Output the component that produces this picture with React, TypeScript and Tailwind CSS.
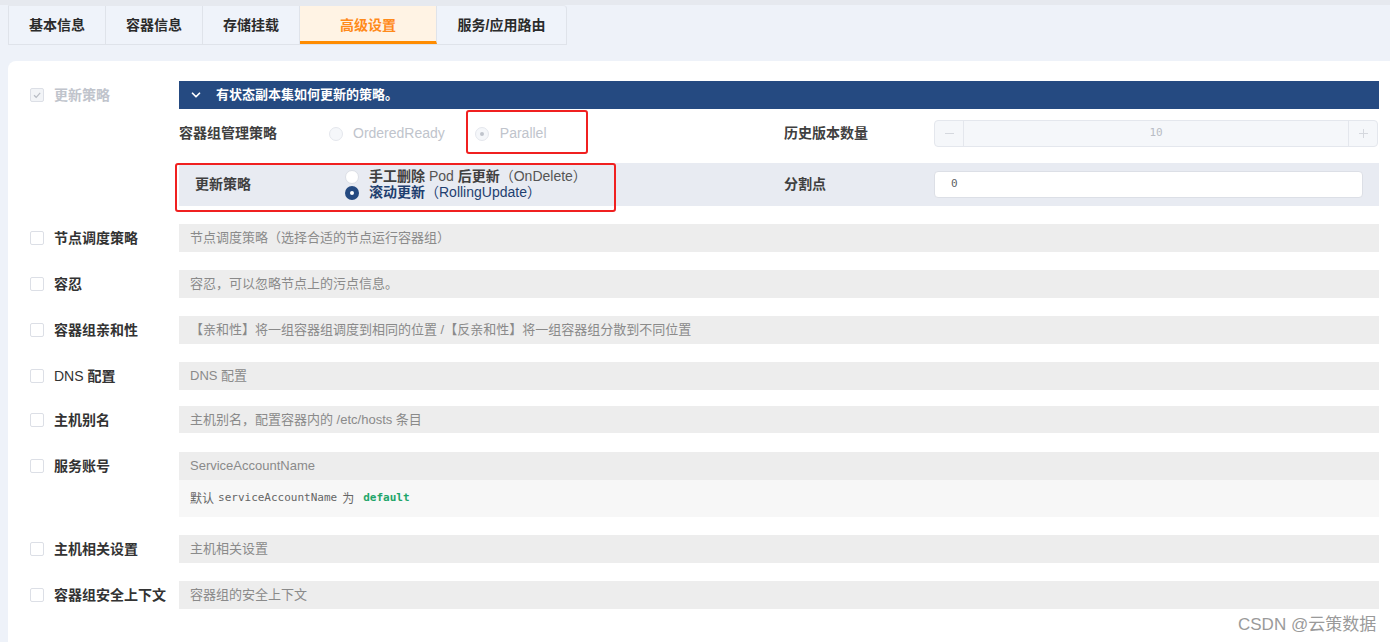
import React from "react";

const CJK = "font-['Liberation_Sans','Noto_Sans_CJK_SC',sans-serif]";

function Checkbox({ checked = false }: { checked?: boolean }) {
  if (checked) {
    return (
      <span className="flex h-[14px] w-[14px] shrink-0 items-center justify-center rounded-[2px] border border-[#dcdfe6] bg-[#f2f4f7]">
        <svg width="10" height="10" viewBox="0 0 10 10">
          <path d="M2 5.2 L4.2 7.3 L8.2 2.8" fill="none" stroke="#b8bcc4" strokeWidth="1.2" />
        </svg>
      </span>
    );
  }
  return <span className="h-[14px] w-[14px] shrink-0 rounded-[2px] border border-[#dcdfe6] bg-white" />;
}

function Radio({ kind }: { kind: "off" | "disabledOff" | "disabledOn" | "on" }) {
  if (kind === "on") {
    return (
      <span className="flex h-[14px] w-[14px] shrink-0 items-center justify-center rounded-full bg-[#254a81]">
        <span className="h-[4px] w-[4px] rounded-full bg-white" />
      </span>
    );
  }
  if (kind === "disabledOn") {
    return (
      <span className="flex h-[14px] w-[14px] shrink-0 items-center justify-center rounded-full border border-[#e4e7ed] bg-[#f5f7fa]">
        <span className="h-[4px] w-[4px] rounded-full bg-[#c0c4cc]" />
      </span>
    );
  }
  if (kind === "disabledOff") {
    return <span className="h-[14px] w-[14px] shrink-0 rounded-full border border-[#e4e7ed] bg-[#f5f7fa]" />;
  }
  return <span className="h-[14px] w-[14px] shrink-0 rounded-full border border-[#dcdfe6] bg-white" />;
}

function Row({
  label,
  children,
  mt = "mt-[18px]",
}: {
  label: React.ReactNode;
  children: React.ReactNode;
  mt?: string;
}) {
  return (
    <div className={`flex items-start ${mt}`}>
      <div className="flex h-[28px] w-[171px] shrink-0 items-center gap-[10px] pl-[22px]">
        <Checkbox />
        <span className="text-[14px] font-bold text-[#333]">{label}</span>
      </div>
      <div className="w-[1200px]">{children}</div>
    </div>
  );
}

function Bar({ text, h = "h-[28px]" }: { text: React.ReactNode; h?: string }) {
  return (
    <div className={`flex ${h} items-center bg-[#ededed] pl-[11px] text-[13px] text-[#8a8a8a]`}>{text}</div>
  );
}

export default function App() {
  const tabs = ["基本信息", "容器信息", "存储挂载", "高级设置", "服务/应用路由"];
  const widths = ["w-[97px]", "w-[97px]", "w-[97px]", "w-[137px]", "w-[129px]"];
  return (
    <div className={`relative h-[642px] w-[1390px] overflow-hidden bg-[#eef2f9] ${CJK}`}>
      <div className="h-[5px] bg-[#e6e9ef]" />
      {/* tabs */}
      <div className="ml-[8px] flex h-[40px] w-fit rounded-tr-[4px] border border-b-[#dfe3ea] border-l-[#dfe3ea] border-r-[#dfe3ea] border-t-[#e6e9ef] bg-[#eff3fa]">
        {tabs.map((t, i) => {
          const active = i === 3;
          return (
            <div
              key={t}
              className={`flex ${widths[i]} items-center justify-center text-[14px] font-bold ${
                i < 4 ? "border-r border-[#dfe3ea]" : ""
              } ${active ? "border-b-[3px] border-b-[#ff8c00] bg-[#fff3e4] pt-[3px] text-[#ff8a1a]" : "text-[#2b2b2b]"}`}
            >
              {t}
            </div>
          );
        })}
      </div>
      {/* card */}
      <div className="ml-[8px] mt-[16px] h-[600px] rounded-tl-[8px] bg-white pt-[20px]">
        {/* update strategy row */}
        <div className="flex items-start">
          <div className="flex h-[28px] w-[171px] shrink-0 items-center gap-[10px] pl-[22px]">
            <Checkbox checked />
            <span className="text-[14px] font-bold text-[#c0c4cc]">更新策略</span>
          </div>
          <div className="w-[1200px]">
            <div className="flex h-[28px] items-center bg-[#254a81] pl-[10px] text-white">
              <svg width="14" height="14" viewBox="0 0 24 24" fill="none" stroke="white" strokeWidth="3" strokeLinecap="round" strokeLinejoin="round">
                <path d="M6 9l6 6 6-6" />
              </svg>
              <span className="ml-[13px] text-[13px] font-bold">有状态副本集如何更新的策略。</span>
            </div>
            <div className="mt-[11px] flex h-[27px] items-center">
              <div className="flex w-[605px] items-center">
                <span className="w-[150px] text-[14px] font-bold text-[#404040]">容器组管理策略</span>
                <div className="flex items-center gap-[10px]">
                  <Radio kind="disabledOff" />
                  <span className="text-[14px] text-[#c0c4cc]">OrderedReady</span>
                </div>
                <div className="ml-[30px] flex items-center gap-[11px]">
                  <Radio kind="disabledOn" />
                  <span className="text-[14px] text-[#c0c4cc]">Parallel</span>
                </div>
              </div>
              <div className="flex w-[595px] items-center">
                <span className="w-[150px] text-[14px] font-bold text-[#404040]">历史版本数量</span>
                <div className="flex h-[27px] w-[444px] items-stretch rounded-[4px] border border-[#e4e7ed] bg-[#f5f7fa]">
                  <div className="flex w-[29px] items-center justify-center border-r border-[#e4e7ed]">
                    <span className="h-px w-[9px] bg-[#d5d8de]" />
                  </div>
                  <div className="flex flex-1 items-center justify-center font-['DejaVu_Sans_Mono',monospace] text-[11px] text-[#b8bcc4]">
                    10
                  </div>
                  <div className="relative flex w-[29px] items-center justify-center border-l border-[#e4e7ed]">
                    <span className="absolute h-px w-[9px] bg-[#d5d8de]" />
                    <span className="absolute h-[9px] w-px bg-[#d5d8de]" />
                  </div>
                </div>
              </div>
            </div>
            <div className="mt-[16px] flex h-[43px] items-center bg-[#e8ebf2]">
              <div className="flex w-[605px] items-center pl-[16px]">
                <span className="w-[150px] text-[14px] font-bold text-[#404040]">更新策略</span>
                <div className="flex flex-col">
                  <div className="flex h-[16px] items-center gap-[10px]">
                    <Radio kind="off" />
                    <span className="text-[14px] text-[#555]">
                      <b className="text-[#404040]">手工删除</b> Pod <b className="text-[#404040]">后更新</b>（OnDelete）
                    </span>
                  </div>
                  <div className="flex h-[16px] items-center gap-[10px]">
                    <Radio kind="on" />
                    <span className="text-[14px] text-[#1f3f70]">
                      <b>滚动更新</b>（RollingUpdate）
                    </span>
                  </div>
                </div>
              </div>
              <div className="flex w-[595px] items-center">
                <span className="w-[150px] text-[14px] font-bold text-[#404040]">分割点</span>
                <div className="flex h-[27px] w-[429px] items-center rounded-[4px] border border-[#dcdfe6] bg-white pl-[16px] font-['DejaVu_Sans_Mono',monospace] text-[11px] text-[#606266]">
                  0
                </div>
              </div>
            </div>
          </div>
        </div>

        <Row label="节点调度策略">
          <Bar text="节点调度策略（选择合适的节点运行容器组）" />
        </Row>
        <Row label="容忍">
          <Bar text="容忍，可以忽略节点上的污点信息。" />
        </Row>
        <Row label="容器组亲和性">
          <Bar text="【亲和性】将一组容器组调度到相同的位置 /【反亲和性】将一组容器组分散到不同位置" />
        </Row>
        <Row
          label={
            <>
              <span className="font-normal">DNS</span> 配置
            </>
          }
        >
          <Bar text="DNS 配置" />
        </Row>
        <Row label="主机别名" mt="mt-[16px]">
          <Bar h="h-[27px]" text="主机别名，配置容器内的 /etc/hosts 条目" />
        </Row>
        <Row label="服务账号">
          <Bar text="ServiceAccountName" />
          <div className="flex h-[37px] items-center bg-[#f7f7f7] pl-[11px] text-[11px] text-[#666]">
            <span className="text-[12px]">默认</span>
            <span className="ml-[4px] font-['DejaVu_Sans_Mono',monospace]">serviceAccountName</span>
            <span className="ml-[5px] text-[12px]">为</span>
            <span className="ml-[9px] font-['DejaVu_Sans_Mono',monospace] font-bold text-[#1fa56a]">default</span>
          </div>
        </Row>
        <Row label="主机相关设置">
          <Bar text="主机相关设置" />
        </Row>
        <Row label="容器组安全上下文">
          <Bar text="容器组的安全上下文" />
        </Row>
      </div>

      {/* annotation boxes */}
      <div className="absolute left-[466px] top-[110px] h-[44px] w-[122px] rounded-[3px] border-[2.5px] border-[#f02020]" />
      <div className="absolute left-[175px] top-[163px] h-[49px] w-[441px] rounded-[3px] border-[2.5px] border-[#f02020]" />

      {/* watermark */}
      <div className="absolute left-[1238px] top-[612px] text-[17px] text-[#9a9a9a]">CSDN @云策数据</div>
    </div>
  );
}
